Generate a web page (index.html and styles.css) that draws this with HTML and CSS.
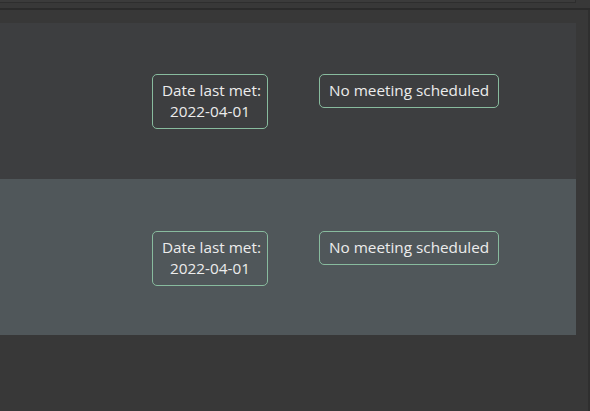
FILE: index.html
```html
<!DOCTYPE html>
<html>
<head>
<meta charset="utf-8">
<link rel="stylesheet" href="styles.css">
</head>
<body>
<div class="topbar"></div>
<div class="divider"></div>
<div class="main">
  <div class="list">
    <div class="row row-a">
      <div class="badge badge-date">Date last met:<br>2022-04-01</div>
      <div class="badge">No meeting scheduled</div>
    </div>
    <div class="row row-b">
      <div class="badge badge-date">Date last met:<br>2022-04-01</div>
      <div class="badge">No meeting scheduled</div>
    </div>
  </div>
  <div class="scrollbar"></div>
</div>
</body>
</html>
```
FILE: styles.css
```css
html, body {
  margin: 0;
  padding: 0;
  background: #383838;
  width: 590px;
  height: 411px;
  overflow: hidden;
  font-family: "Open Sans", "Noto Sans", sans-serif;
}
.topbar {
  width: 575px;
  height: 2px;
  background: #3b3b3b;
  border-right: 1px solid #2e2e2e;
  border-bottom: 1px solid #2e2e2e;
}
.divider {
  margin-top: 5px;
  height: 2px;
  background: #2b2b2b;
}
.main {
  display: flex;
  height: 401px;
}
.list {
  width: 576px;
  padding-top: 13px;
}
.scrollbar {
  margin-left: 12px;
  width: 2px;
  background: #2f2f2f;
}
.row {
  height: 156px;
  display: flex;
  align-items: flex-start;
  gap: 51px;
  padding-left: 152px;
  box-sizing: border-box;
}
.row-a {
  background: #3d3e40;
  padding-top: 51px;
}
.row-b {
  background: #50575a;
  padding-top: 52px;
}
.badge {
  border: 1px solid #88bb9e;
  border-radius: 5px;
  padding: 5px 9px 6px;
  color: #ececec;
  font-size: 15.3px;
  line-height: 21px;
  text-align: center;
  white-space: nowrap;
}
.badge-date {
  width: 96px;
}
```
